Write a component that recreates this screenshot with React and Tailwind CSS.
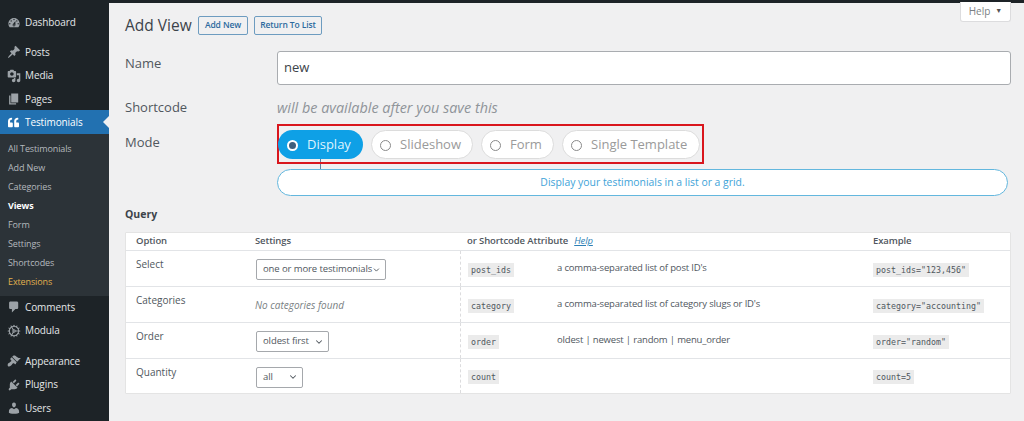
import { Cog, ChevronDown } from 'lucide-react';
import { FaQuoteLeft } from 'react-icons/fa';

const font = { fontFamily: '"Open Sans", "Liberation Sans", sans-serif' };

// dashicons
const paths = {
  dashboard: 'M3.76 16h12.48c1.1-1.37 1.76-3.11 1.76-5 0-4.42-3.58-8-8-8s-8 3.58-8 8c0 1.89.66 3.63 1.76 5zM10 4c.55 0 1 .45 1 1s-.45 1-1 1-1-.45-1-1 .45-1 1-1zM6 6c.55 0 1 .45 1 1s-.45 1-1 1-1-.45-1-1 .45-1 1-1zm8 0c.55 0 1 .45 1 1s-.45 1-1 1-1-.45-1-1 .45-1 1-1zm-5.37 5.55L12 7v6c0 1.1-.9 2-2 2s-2-.9-2-2c0-.57.24-1.08.63-1.45zM4 10c.55 0 1 .45 1 1s-.45 1-1 1-1-.45-1-1 .45-1 1-1zm12 0c.55 0 1 .45 1 1s-.45 1-1 1-1-.45-1-1 .45-1 1-1zm-5 3c0-.55-.45-1-1-1s-1 .45-1 1 .45 1 1 1 1-.45 1-1z',
  posts: 'M10.44 3.02l1.82-1.82 6.36 6.35-1.83 1.82c-1.05-.68-2.48-.57-3.41.36l-.75.75c-.92.93-1.04 2.35-.35 3.41l-1.83 1.82-2.41-2.41-2.8 2.79c-.42.42-3.38 2.71-3.8 2.29s1.86-3.39 2.28-3.81l2.79-2.79L4.1 9.36l1.83-1.82c1.05.69 2.48.57 3.4-.36l.75-.75c.93-.92 1.05-2.35.36-3.41z',
  media: 'M13 11V4c0-.55-.45-1-1-1h-1.67L9 1H5L3.67 3H2c-.55 0-1 .45-1 1v7c0 .55.45 1 1 1h10c.55 0 1-.45 1-1zM7 4.5c1.38 0 2.5 1.12 2.5 2.5S8.38 9.5 7 9.5 4.5 8.38 4.5 7 5.62 4.5 7 4.5zM14 6h5v10.5c0 1.38-1.12 2.5-2.5 2.5S14 17.88 14 16.5s1.12-2.5 2.5-2.5c.17 0 .34.02.5.05V9h-3V6zm-4 8.05V13h2v3.5c0 1.38-1.12 2.5-2.5 2.5S7 17.88 7 16.5 8.12 14 9.5 14c.17 0 .34.02.5.05z',
  pages: 'M6 15V2h10v13H6zm-1 1h8v2H3V5h2v11z',
  comments: 'M5 2h9c1.1 0 2 .9 2 2v7c0 1.1-.9 2-2 2h-2l-5 5v-5H5c-1.1 0-2-.9-2-2V4c0-1.1.9-2 2-2z',
  appearance: 'M14.48 11.06L7.41 3.99l1.5-1.5c.5-.56 2.3-.47 3.51.32 1.21.8 1.43 1.28 2.91 2.1 1.18.64 2.45 1.26 4.45.85zm-.71.71L6.7 4.7 4.93 6.47c-.39.39-.39 1.02 0 1.41l1.06 1.06c.39.39.39 1.03 0 1.42-.6.6-1.43 1.11-2.21 1.69-.35.26-.7.53-1.01.84C1.43 13.23.91 14.75.97 15.98c.04.99.96 2.04 2.11 1.93 1.44-.13 2.22-.8 3.56-2.14.57-.57 1.27-1.7 1.96-2.39.4-.39 1.03-.39 1.42 0l1.06 1.06c.39.39 1.02.39 1.41 0z',
  plugins: 'M13.11 4.36L9.87 7.6 8 5.73l3.24-3.24c.35-.34 1.05-.2 1.56.32.52.51.66 1.21.31 1.55zm-8 1.77l.91-1.12 9.01 9.01-1.19.84c-.71.71-2.63 1.16-3.82 1.16H6.14L4.9 17.26c-.59.59-1.54.59-2.12 0-.59-.58-.59-1.53 0-2.12l1.24-1.24v-3.88c0-1.13.4-3.19 1.09-3.89zm7.26 3.97l3.24-3.24c.34-.35 1.04-.21 1.55.31.52.51.66 1.21.31 1.55l-3.24 3.25z',
  users: 'M10 9.25c-2.27 0-2.73-3.44-2.73-3.44C7 4.02 7.82 2 9.97 2c2.16 0 2.98 2.02 2.71 3.81 0 0-.41 3.44-2.68 3.44zm0 2.57L12.72 10c2.39 0 4.52 2.33 4.52 4.53v2.49s-3.65 1.13-7.24 1.13c-3.65 0-7.24-1.13-7.24-1.13v-2.49c0-2.25 1.94-4.48 4.47-4.48z',
};

function Dashicon({ name }) {
  return (
    <svg width="14" height="14" viewBox="0 0 20 20" fill="currentColor">
      <path d={paths[name]} />
    </svg>
  );
}

function MenuItem({ icon, label, className = '' }) {
  return (
    <div className={`flex h-[23.5px] items-center text-[10px] tracking-[-0.1px] text-[#e4e6e8] ${className}`}>
      <span className="flex w-[25px] justify-center pl-[2px] text-[#9ca2a7]">
        {icon === 'modula' ? <Cog size={14} strokeWidth={1.8} /> : <Dashicon name={icon} />}
      </span>
      <span>{label}</span>
    </div>
  );
}

function SubItem({ label, className = 'text-[#b4b9be]' }) {
  return <div className={`flex h-[19px] items-center pl-2 text-[9px] tracking-[-0.12px] ${className}`}>{label}</div>;
}

function Sidebar() {
  return (
    <aside className="flex w-[109px] shrink-0 flex-col bg-[#1d2327] pt-[8px]">
      <MenuItem icon="dashboard" label="Dashboard" className="mb-[6px]" />
      <MenuItem icon="posts" label="Posts" />
      <MenuItem icon="media" label="Media" />
      <MenuItem icon="pages" label="Pages" className="-mb-[1px]" />
      <div className="relative flex h-[23.5px] items-center bg-[#2271b1] pt-[1px] text-[10px] tracking-[-0.1px] text-white">
        <span className="flex w-[25px] justify-center pl-[1px]">
          <FaQuoteLeft size={11} />
        </span>
        <span>Testimonials</span>
        <span className="absolute right-0 top-[6px] h-0 w-0 border-y-[6px] border-r-[6px] border-y-transparent border-r-[#f0f0f1]" />
      </div>
      <div className="bg-[#2c3338] pb-[4px] pt-[6px]">
        <SubItem label="All Testimonials" />
        <SubItem label="Add New" />
        <SubItem label="Categories" />
        <SubItem label="Views" className="font-bold text-white" />
        <SubItem label="Form" />
        <SubItem label="Settings" />
        <SubItem label="Shortcodes" />
        <SubItem label="Extensions" className="text-[#e0b14e]" />
      </div>
      <MenuItem icon="comments" label="Comments" />
      <MenuItem icon="modula" label="Modula" className="mb-[7px]" />
      <MenuItem icon="appearance" label="Appearance" />
      <MenuItem icon="plugins" label="Plugins" />
      <MenuItem icon="users" label="Users" />
    </aside>
  );
}

function Pill({ label, active, className = '' }) {
  if (active) {
    return (
      <div className={`flex h-[29px] items-center rounded-full bg-[#0ea0e6] pt-[2px] text-[13px] text-[#dff3fd] ${className}`}>
        <span className="mr-[9px] h-[11px] w-[11px] rounded-full border-[2.5px] border-white bg-[#3f5f7c]" />
        {label}
      </div>
    );
  }
  return (
    <div className={`flex h-[29px] items-center rounded-full border border-[#dcdcdc] bg-white pt-[2px] text-[13px] text-[#9a9a9a] ${className}`}>
      <span className="mr-[9px] h-[11px] w-[11px] rounded-full border border-[#8a8a8a]" />
      {label}
    </div>
  );
}

function Select({ label, className = '' }) {
  return (
    <div className={`ml-[1px] flex h-[21px] items-center justify-between whitespace-nowrap rounded-[2px] border border-[#a5a8ac] bg-white pl-[6px] pr-[4px] text-[9.5px] tracking-[-0.1px] text-[#50575e] ${className}`}>
      <span>{label}</span>
      <ChevronDown size={10} strokeWidth={2.5} />
    </div>
  );
}

function Code({ children }) {
  return (
    <code className="inline-block h-[14px] bg-[#ebebeb] px-[3px] text-[8.3px] leading-[14px] text-[#50575e]" style={{ fontFamily: '"DejaVu Sans Mono", monospace' }}>
      {children}
    </code>
  );
}

const rowGrid = 'grid grid-cols-[129px_205px_97px_316px_1fr] border-t border-[#e2e4e7] text-[10px] text-[#50575e]';

function QueryRow({ option, setting, attr, desc, example, className = 'h-[36px]' }) {
  return (
    <div className={`${rowGrid} ${className}`}>
      <div className="pl-[10px] pt-[6px]">{option}</div>
      <div className="flex items-center pt-[2px]">{setting}</div>
      <div className="flex items-center border-l border-dashed border-[#dcdcde] pl-[7px] pt-[2px]"><Code>{attr}</Code></div>
      <div className="flex items-center text-[9.5px] tracking-[-0.17px]">{desc}</div>
      <div className="flex items-center pt-[2px]"><Code>{example}</Code></div>
    </div>
  );
}

function QueryTable() {
  return (
    <div className="mt-[11px] rounded-[1px] border border-[#e4e4e4] bg-white">
      <div className="grid h-[17px] grid-cols-[129px_205px_413px_1fr] items-center text-[9.5px] font-semibold tracking-[-0.1px] text-[#50575e]">
        <div className="pl-[10px]">Option</div>
        <div>Settings</div>
        <div className="pl-[7px]">
          or Shortcode Attribute
          <span className="ml-[6px] font-normal italic text-[#2e7fb5] underline">Help</span>
        </div>
        <div>Example</div>
      </div>
      <QueryRow option="Select" setting={<Select label="one or more testimonials" className="w-[130px]" />} attr="post_ids" desc="a comma-separated list of post ID's" example={'post_ids="123,456"'} />
      <QueryRow option="Categories" setting={<span className="italic text-[#7a7f84]">No categories found</span>} attr="category" desc="a comma-separated list of category slugs or ID's" example={'category="accounting"'} />
      <QueryRow option="Order" setting={<Select label="oldest first" className="w-[73px]" />} attr="order" desc="oldest | newest | random | menu_order" example={'order="random"'} />
      <QueryRow option="Quantity" setting={<Select label="all" className="w-[47px]" />} attr="count" desc="" example="count=5" className="h-[35px]" />
    </div>
  );
}

export default function App() {
  return (
    <div className="flex h-[421px] w-[1024px] flex-col overflow-hidden bg-[#f0f0f1]" style={font}>
      <div className="h-[3px] shrink-0 bg-[#1d2327]" />
      <div className="flex min-h-0 flex-1">
        <Sidebar />
        <main className="relative flex-1 pl-4 pr-[13px]">
          <div className="absolute right-[13px] top-[-1px] flex h-[20px] w-[51px] items-center justify-center gap-[5px] rounded-b-[3px] border border-t-0 border-[#dcdcde] bg-white text-[10px] text-[#7a7f84]">
            Help <span className="text-[7px] text-[#555]">▼</span>
          </div>

          <div className="mt-[5px] flex h-[27px] items-center pt-[8px]">
            <h1 className="w-[65px] whitespace-nowrap text-[15.5px] leading-none text-[#3c434a]">Add View</h1>
            <button className="ml-[8px] flex h-[19px] w-[50px] items-center justify-center rounded-[2px] border border-[#6d9cc0] text-[8.5px] font-semibold tracking-[-0.1px] text-[#2c6a9e]">Add New</button>
            <button className="ml-[6px] flex h-[19px] w-[68px] items-center justify-center rounded-[2px] border border-[#6d9cc0] text-[8.5px] font-semibold tracking-[-0.1px] text-[#2c6a9e]">Return To List</button>
          </div>

          <div className="mt-[16px] flex">
            <div className="w-[152px] pt-[2px] text-[13px] leading-[20px] text-[#50575e]">Name</div>
            <div className="flex h-[34px] flex-1 items-center rounded-[3px] border border-[#a9acb0] bg-white pl-[6px] text-[13px] text-[#3c434a]">new</div>
          </div>

          <div className="mt-[13px] flex h-[20px] items-center">
            <div className="w-[152px] text-[13px] text-[#50575e]">Shortcode</div>
            <div className="text-[14.4px] italic text-[#8f9499]">will be available after you save this</div>
          </div>

          <div className="mt-[6px] flex">
            <div className="w-[152px] pt-[8px] text-[13px] leading-[20px] text-[#50575e]">Mode</div>
            <div className="flex h-[40px] w-[427px] items-center gap-[8px] border-2 border-[#d9161d]">
              <Pill label="Display" active className="-ml-[1px] w-[85px] pl-[9px]" />
              <Pill label="Slideshow" className="w-[102px] pl-[8px]" />
              <Pill label="Form" className="w-[73px] pl-[8px]" />
              <Pill label="Single Template" className="w-[138px] pl-[8px]" />
            </div>
          </div>

          <div className="-mt-[6px] ml-[195px] h-[11px] w-[1px] bg-[#5f7f9f]" />
          <div className="ml-[152px] flex h-[27px] w-[731px] items-center justify-center rounded-full border border-[#63b7de] bg-white text-[10.4px] text-[#3ea3d8]">
            Display your testimonials in a list or a grid.
          </div>

          <div className="mt-[11px] text-[10.5px] font-bold leading-[14px] text-[#3c434a]">Query</div>
          <QueryTable />
        </main>
      </div>
    </div>
  );
}
